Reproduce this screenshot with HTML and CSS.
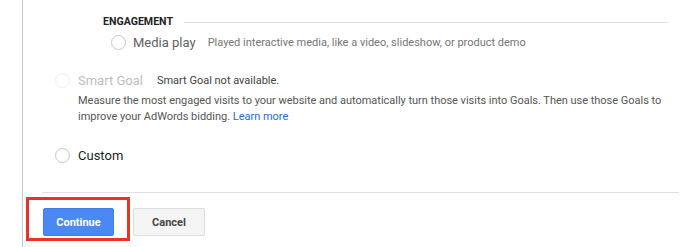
FILE: index.html
```html
<!DOCTYPE html>
<html>
<head>
<meta charset="utf-8">
<link rel="stylesheet" href="styles.css">
</head>
<body>
<div class="panel">
  <div class="heading">
    <span class="heading-text">ENGAGEMENT</span>
    <span class="heading-rule"></span>
  </div>
  <div class="option option-nested">
    <span class="radio"></span>
    <span class="label">Media play</span>
    <span class="desc">Played interactive media, like a video, slideshow, or product demo</span>
  </div>
  <div class="option option-top smart">
    <span class="radio radio-disabled"></span>
    <span class="label label-disabled">Smart Goal</span>
    <span class="note">Smart Goal not available.</span>
  </div>
  <p class="explain">Measure the most engaged visits to your website and automatically turn those visits into Goals. Then use those Goals to improve your AdWords bidding. <a class="link">Learn more</a></p>
  <div class="option option-top custom">
    <span class="radio"></span>
    <span class="label label-dark">Custom</span>
  </div>
  <div class="separator"></div>
  <div class="actions">
    <div class="highlight">
      <button class="btn btn-primary">Continue</button>
    </div>
    <button class="btn btn-secondary">Cancel</button>
  </div>
</div>
</body>
</html>
```
FILE: styles.css
```css
html, body {
  margin: 0;
  padding: 0;
  background: #ffffff;
}
body {
  font-family: Roboto, "Liberation Sans", Arial, sans-serif;
  width: 700px;
  height: 247px;
  overflow: hidden;
}
.panel {
  margin-left: 22px;
  border-left: 1px solid #c8c8c8;
  height: 247px;
  box-sizing: border-box;
  padding-top: 14px;
}
.heading {
  display: flex;
  align-items: center;
  height: 16px;
  padding-left: 80px;
  margin-right: 31px;
}
.heading-text {
  font-size: 10.6px;
  font-weight: 700;
  color: #212121;
  line-height: 16px;
}
.heading-rule {
  flex: 1;
  height: 1px;
  background: #e3e3e3;
  margin-left: 11px;
}
.option {
  display: flex;
  align-items: center;
  height: 20px;
}
.option-nested {
  margin-top: 2px;
  padding-left: 88px;
}
.option-top {
  padding-left: 32px;
}
.smart {
  margin-top: 18px;
}
.custom {
  margin-top: 20px;
}
.radio {
  width: 15px;
  height: 15px;
  box-sizing: border-box;
  border: 1.5px solid #c6c6c6;
  border-radius: 50%;
  flex: none;
}
.radio-disabled {
  border-color: #f0f0f0;
}
.label {
  margin-left: 8px;
  font-size: 13px;
  color: #5f5f5f;
}
.option-nested .label {
  margin-left: 7px;
}
.label-disabled {
  color: #bdbdbd;
}
.label-dark {
  color: #222222;
}
.desc {
  margin-left: 12px;
  font-size: 11px;
  color: #757575;
}
.note {
  margin-left: 14px;
  font-size: 11px;
  color: #424242;
}
.explain {
  margin: 3px 0 0 0;
  padding-left: 55px;
  padding-right: 30px;
  font-size: 11px;
  line-height: 16px;
  letter-spacing: -0.02px;
  color: #555555;
}
.link {
  color: #2a6ad6;
}
.separator {
  margin: 27px 21px 0 19px;
  height: 1px;
  background: #e0e0e0;
}
.actions {
  display: flex;
  align-items: flex-start;
  margin-top: 4px;
  margin-left: 3px;
}
.highlight {
  border: 3px solid #e8332a;
  padding: 8px 13px 2px 14px;
}
.btn {
  font-family: Roboto, "Liberation Sans", Arial, sans-serif;
  font-size: 11px;
  font-weight: 700;
  height: 28px;
  box-sizing: border-box;
  border-radius: 2px;
  padding: 0;
  cursor: pointer;
}
.btn-primary {
  width: 71px;
  background: #4a89f3;
  border: 1px solid #3f7ee8;
  color: #ffffff;
}
.btn-secondary {
  width: 72px;
  margin-left: 3px;
  margin-top: 11px;
  background: #f5f5f5;
  border: 1px solid #dcdcdc;
  color: #444444;
}
```
